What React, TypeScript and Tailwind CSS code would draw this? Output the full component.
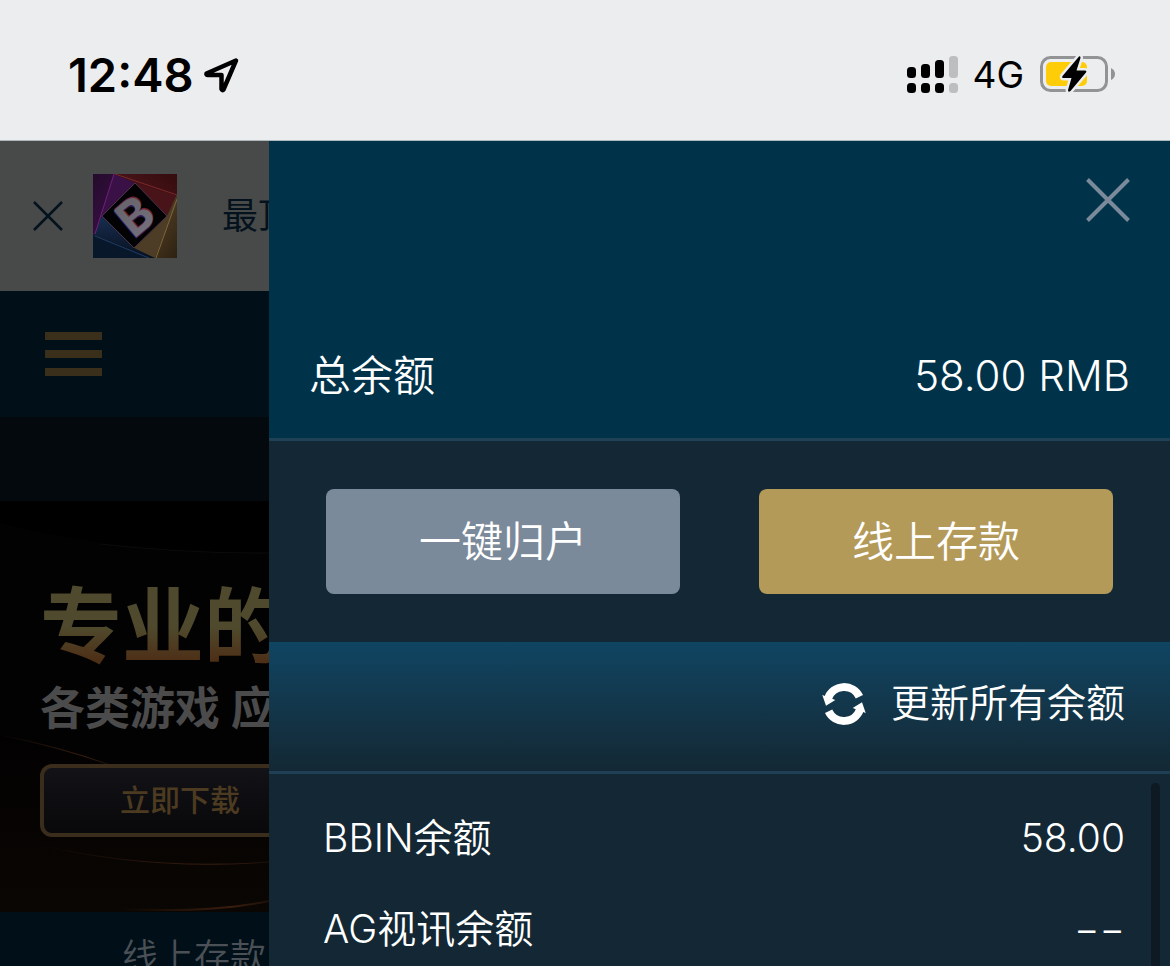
import React, { useState } from 'react';

const balances = [
  { name: 'BBIN余额', amount: '58.00' },
  { name: 'AG视讯余额', amount: '−−' },
];

function StatusBar() {
  return (
    <header className="flex h-[141px] shrink-0 items-center justify-between border-b border-[#aeb9be] bg-[#ecedef] pt-[10px] pr-[54px] pl-[68px] text-black">
      <div className="flex items-center gap-2">
        <span className="text-[47px] leading-[60px] font-semibold">12:48</span>
        <svg width="38" height="40" viewBox="0 0 38 40" fill="none" aria-hidden="true">
          <path
            d="M34 5.5 4.5 18.5Q4 20 6 20H19.5V34Q20.5 36 21.5 34.5Z"
            stroke="currentColor"
            strokeWidth="4.5"
            strokeLinejoin="round"
          />
        </svg>
      </div>
      <div className="flex items-center gap-[14px]">
        <svg width="51" height="38" viewBox="0 0 51 38" aria-hidden="true">
          <rect x="0" y="11" width="9" height="11" rx="3.5" />
          <rect x="14" y="8" width="9" height="14" rx="3.5" />
          <rect x="28" y="4" width="9" height="18" rx="3.5" />
          <rect x="42" y="0" width="9" height="22" rx="3.5" fill="#bdbec0" />
          <rect x="0" y="27" width="9" height="10" rx="3.5" />
          <rect x="14" y="27" width="9" height="10" rx="3.5" />
          <rect x="28" y="27" width="9" height="10" rx="3.5" />
          <rect x="42" y="27" width="9" height="10" rx="3.5" fill="#bdbec0" />
        </svg>
        <span className="text-[37px] leading-[60px]">4G</span>
        <svg width="78" height="40" viewBox="-2 1 78 40" aria-hidden="true">
          <rect x="1.5" y="3.5" width="65" height="33" rx="9" fill="none" stroke="#929395" strokeWidth="3" />
          <path d="M71 14q4 2 4 6t-4 6z" fill="#929395" />
          <rect x="6" y="8" width="41" height="24" rx="5" fill="#ffcc08" />
          <path
            d="M39 2.5 22.5 22q-1 2 1 2h8L28 36q0 3 2.500 1L46 18.500q1-2-1-2h-8.500L40.500 4Q40.500 1.500 39 2.500Z"
            fill="black"
            stroke="#ecedef"
            strokeWidth="5"
            paintOrder="stroke"
          />
        </svg>
      </div>
    </header>
  );
}

function AppLogo() {
  return (
    <svg width="84" height="84" viewBox="0 0 84 84" className="shrink-0" role="img" aria-label="B">
      <defs>
        <linearGradient id="purple" x1="0" y1="0" x2="1" y2="1">
          <stop offset="0" stopColor="#240b2c" />
          <stop offset="1" stopColor="#451151" />
        </linearGradient>
        <linearGradient id="red" x1="0" y1="1" x2="1" y2="0">
          <stop offset="0" stopColor="#571a20" />
          <stop offset="1" stopColor="#350c0e" />
        </linearGradient>
        <linearGradient id="gold" x1="0" y1="0" x2="1" y2="1">
          <stop offset="0" stopColor="#675233" />
          <stop offset="1" stopColor="#2e2111" />
        </linearGradient>
        <linearGradient id="blue" x1="0" y1="0" x2="0" y2="1">
          <stop offset="0" stopColor="#172d50" />
          <stop offset="1" stopColor="#08111f" />
        </linearGradient>
        <linearGradient id="letter" x1="0" y1="0" x2="0" y2="1">
          <stop offset="0" stopColor="#63616a" />
          <stop offset="1" stopColor="#77727e" />
        </linearGradient>
      </defs>
      <rect width="84" height="84" fill="#0d1421" />
      <path d="M0 0H22L42 9 9 42 2 62 0 60Z" fill="url(#purple)" />
      <path d="M21 0 6 46 42 9Z" fill="#3a1147" />
      <path d="M22 0H84V22L74 42 42 9Z" fill="url(#red)" />
      <path d="M42 9 84 22 74 42Z" fill="#481419" />
      <path d="M84 20V84H62L41 74 74 42Z" fill="url(#gold)" />
      <path d="M41 76 62 84 84 25 74 42Z" fill="#4d3d26" />
      <path d="M0 62 9 42 41 74 62 84H0Z" fill="url(#blue)" />
      <path d="M0 62 41 76 55 84H0Z" fill="#09172b" />
      <g fill="none" strokeWidth="1">
        <path d="M21 0 2 60" stroke="#70207b" />
        <path d="M22 0 84 21" stroke="#7b2929" />
        <path d="M84 25 63 84" stroke="#80683b" />
        <path d="M2 62 56 84" stroke="#213b60" />
      </g>
      <path d="M42 9 74 42 41 74 9 42Z" fill="#030204" stroke="#4a3444" strokeWidth="1" />
      <g transform="rotate(-40 42 42)" fontFamily="Inter, sans-serif" fontWeight="700" fontSize="48" textAnchor="middle">
        <text x="43" y="58" fill="#6d2435">B</text>
        <text x="41" y="60" fill="#34205a">B</text>
        <text x="42" y="59" fill="url(#letter)">B</text>
      </g>
    </svg>
  );
}

function PromoBanner() {
  return (
    <section className="relative h-[411px] shrink-0 overflow-hidden bg-black pt-[78px] pl-10">
      <svg
        className="absolute inset-0 h-full w-full"
        viewBox="0 0 269 411"
        preserveAspectRatio="none"
        fill="none"
        aria-hidden="true"
      >
        <defs>
          <linearGradient id="floor" x1="0" y1="0" x2="0" y2="1">
            <stop offset="0" stopColor="#020101" />
            <stop offset="1" stopColor="#0a0603" />
          </linearGradient>
          <linearGradient id="glow" x1="0" y1="0" x2="1" y2="0">
            <stop offset="0" stopColor="#3a1d0c" stopOpacity="0" />
            <stop offset="0.75" stopColor="#3a1d0f" />
            <stop offset="1" stopColor="#1c1009" />
          </linearGradient>
        </defs>
        <path d="M0 22C80 42 160 52 269 52V411H0Z" fill="#020203" />
        <path d="M0 234Q60 248 110 264H269V411H0Z" fill="url(#floor)" />
        <path d="M100 43Q190 53 269 52" stroke="#0b0b0c" />
        <path d="M0 234Q60 246 110 264" stroke="url(#glow)" />
        <path d="M40 344Q150 370 269 361" stroke="url(#glow)" />
        <path d="M120 408Q210 412 269 400" stroke="url(#glow)" strokeWidth="2" />
      </svg>
      <div className="relative whitespace-nowrap">
        <h2 className="bg-linear-to-b from-[#4f4a2d] from-50% to-[#4d2f16] to-85% bg-clip-text text-[82px] leading-[96px] font-bold text-transparent">
          专业的
        </h2>
        <p className="mt-1 text-[45px] leading-[60px] font-bold text-[#4b4b4b]">各类游戏 应用</p>
        <button
          type="button"
          className="mt-[25px] h-[73px] w-[400px] rounded-xl border-4 border-[#3b2d1c] bg-linear-to-b from-[#121217] to-[#09090b] pl-[76px] text-left text-[30px] font-medium text-[#4c3b20]"
        >
          立即下载
        </button>
      </div>
    </section>
  );
}

function SitePage() {
  return (
    <main className="flex w-[23%] shrink-0 flex-col overflow-hidden bg-[#000f18] whitespace-nowrap">
      <div className="flex h-[150px] shrink-0 items-center bg-[#484949] pl-8 text-[#03121c]">
        <button type="button" aria-label="关闭" className="mr-[29px] shrink-0">
          <svg width="32" height="32" viewBox="0 0 32 32" fill="none" stroke="currentColor" strokeWidth="2.5">
            <path d="M2 2 30 30M30 2 2 30" />
          </svg>
        </button>
        <AppLogo />
        <span className="ml-[45px] text-[36px]">最顶级</span>
      </div>
      <nav className="flex h-[126px] shrink-0 items-center bg-[#000f18] pl-[45px]">
        <button type="button" aria-label="菜单" className="flex w-[57px] flex-col gap-[10px]">
          <span className="h-2 bg-[#392f1b]" />
          <span className="h-2 bg-[#392f1b]" />
          <span className="h-2 bg-[#392f1b]" />
        </button>
      </nav>
      <div className="h-[84px] shrink-0 bg-[#03090c]" />
      <PromoBanner />
      <a href="#deposit" className="pt-5 pl-[122px] text-[36px] leading-[50px] font-[350] text-[#4a5055]">
        线上存款
      </a>
    </main>
  );
}

function RefreshIcon() {
  return (
    <svg width="44" height="44" viewBox="-22 -22 44 44" fill="none" aria-hidden="true">
      <g id="half-turn">
        <path d="M-16-5.500A17 17 0 0 1 15.400-7.200" stroke="white" strokeWidth="8" />
        <path d="M-21.700-9-8.700-4-18 1.700Z" fill="white" />
      </g>
      <use href="#half-turn" transform="rotate(180)" />
    </svg>
  );
}

export default function App() {
  const [open, setOpen] = useState(true);

  return (
    <div className="flex h-screen flex-col overflow-hidden bg-[#000f18] font-['Inter','Noto_Sans_CJK_SC',sans-serif]">
      <StatusBar />
      <div className="flex min-h-0 flex-1">
        <SitePage />
        {open && (
          <aside className="flex min-w-0 flex-1 flex-col bg-[#132834] font-[350] text-white">
            <div className="flex shrink-0 flex-col border-b-[3px] border-[#1f4257] bg-[#003349] px-10 pt-[37px] pb-8">
              <button type="button" aria-label="关闭" onClick={() => setOpen(false)} className="self-end text-[#7b8a9b]">
                <svg width="44" height="44" viewBox="0 0 44 44" fill="none" stroke="currentColor" strokeWidth="4">
                  <path d="M1.500 1.500 42.500 42.500M42.500 1.500 1.500 42.500" />
                </svg>
              </button>
              <div className="mt-[124px] flex justify-between text-[42px] leading-[60px]">
                <span>总余额</span>
                <span>58.00 RMB</span>
              </div>
            </div>

            <div className="grid shrink-0 grid-cols-2 gap-[79px] px-[57px] py-12 text-[42px]">
              <button type="button" className="h-[105px] rounded-lg bg-[#7b8a9a]">
                一键归户
              </button>
              <button type="button" className="h-[105px] rounded-lg bg-[#b49a59]">
                线上存款
              </button>
            </div>

            <button
              type="button"
              className="flex h-[132px] shrink-0 items-center justify-end gap-[25px] border-b-[3px] border-[#1f3f54] bg-linear-to-b from-[#0f4562] to-[#132834] pr-[45px] pb-[6px] text-[39px]"
            >
              <RefreshIcon />
              更新所有余额
            </button>

            {/* Balance list with its scroll thumb */}
            <div className="flex min-h-0 flex-1 overflow-hidden">
              <ul className="flex-1 pt-[19px] pr-[26px] pl-[54px] text-[39px]">
                {balances.map((b) => (
                  <li key={b.name} className="flex h-[91px] items-center justify-between">
                    <span>{b.name}</span>
                    <span>{b.amount}</span>
                  </li>
                ))}
              </ul>
              <div className="mt-[9px] mr-[10px] w-[9px] rounded-t-full bg-[#0e1a23]" />
            </div>
          </aside>
        )}
      </div>
    </div>
  );
}
